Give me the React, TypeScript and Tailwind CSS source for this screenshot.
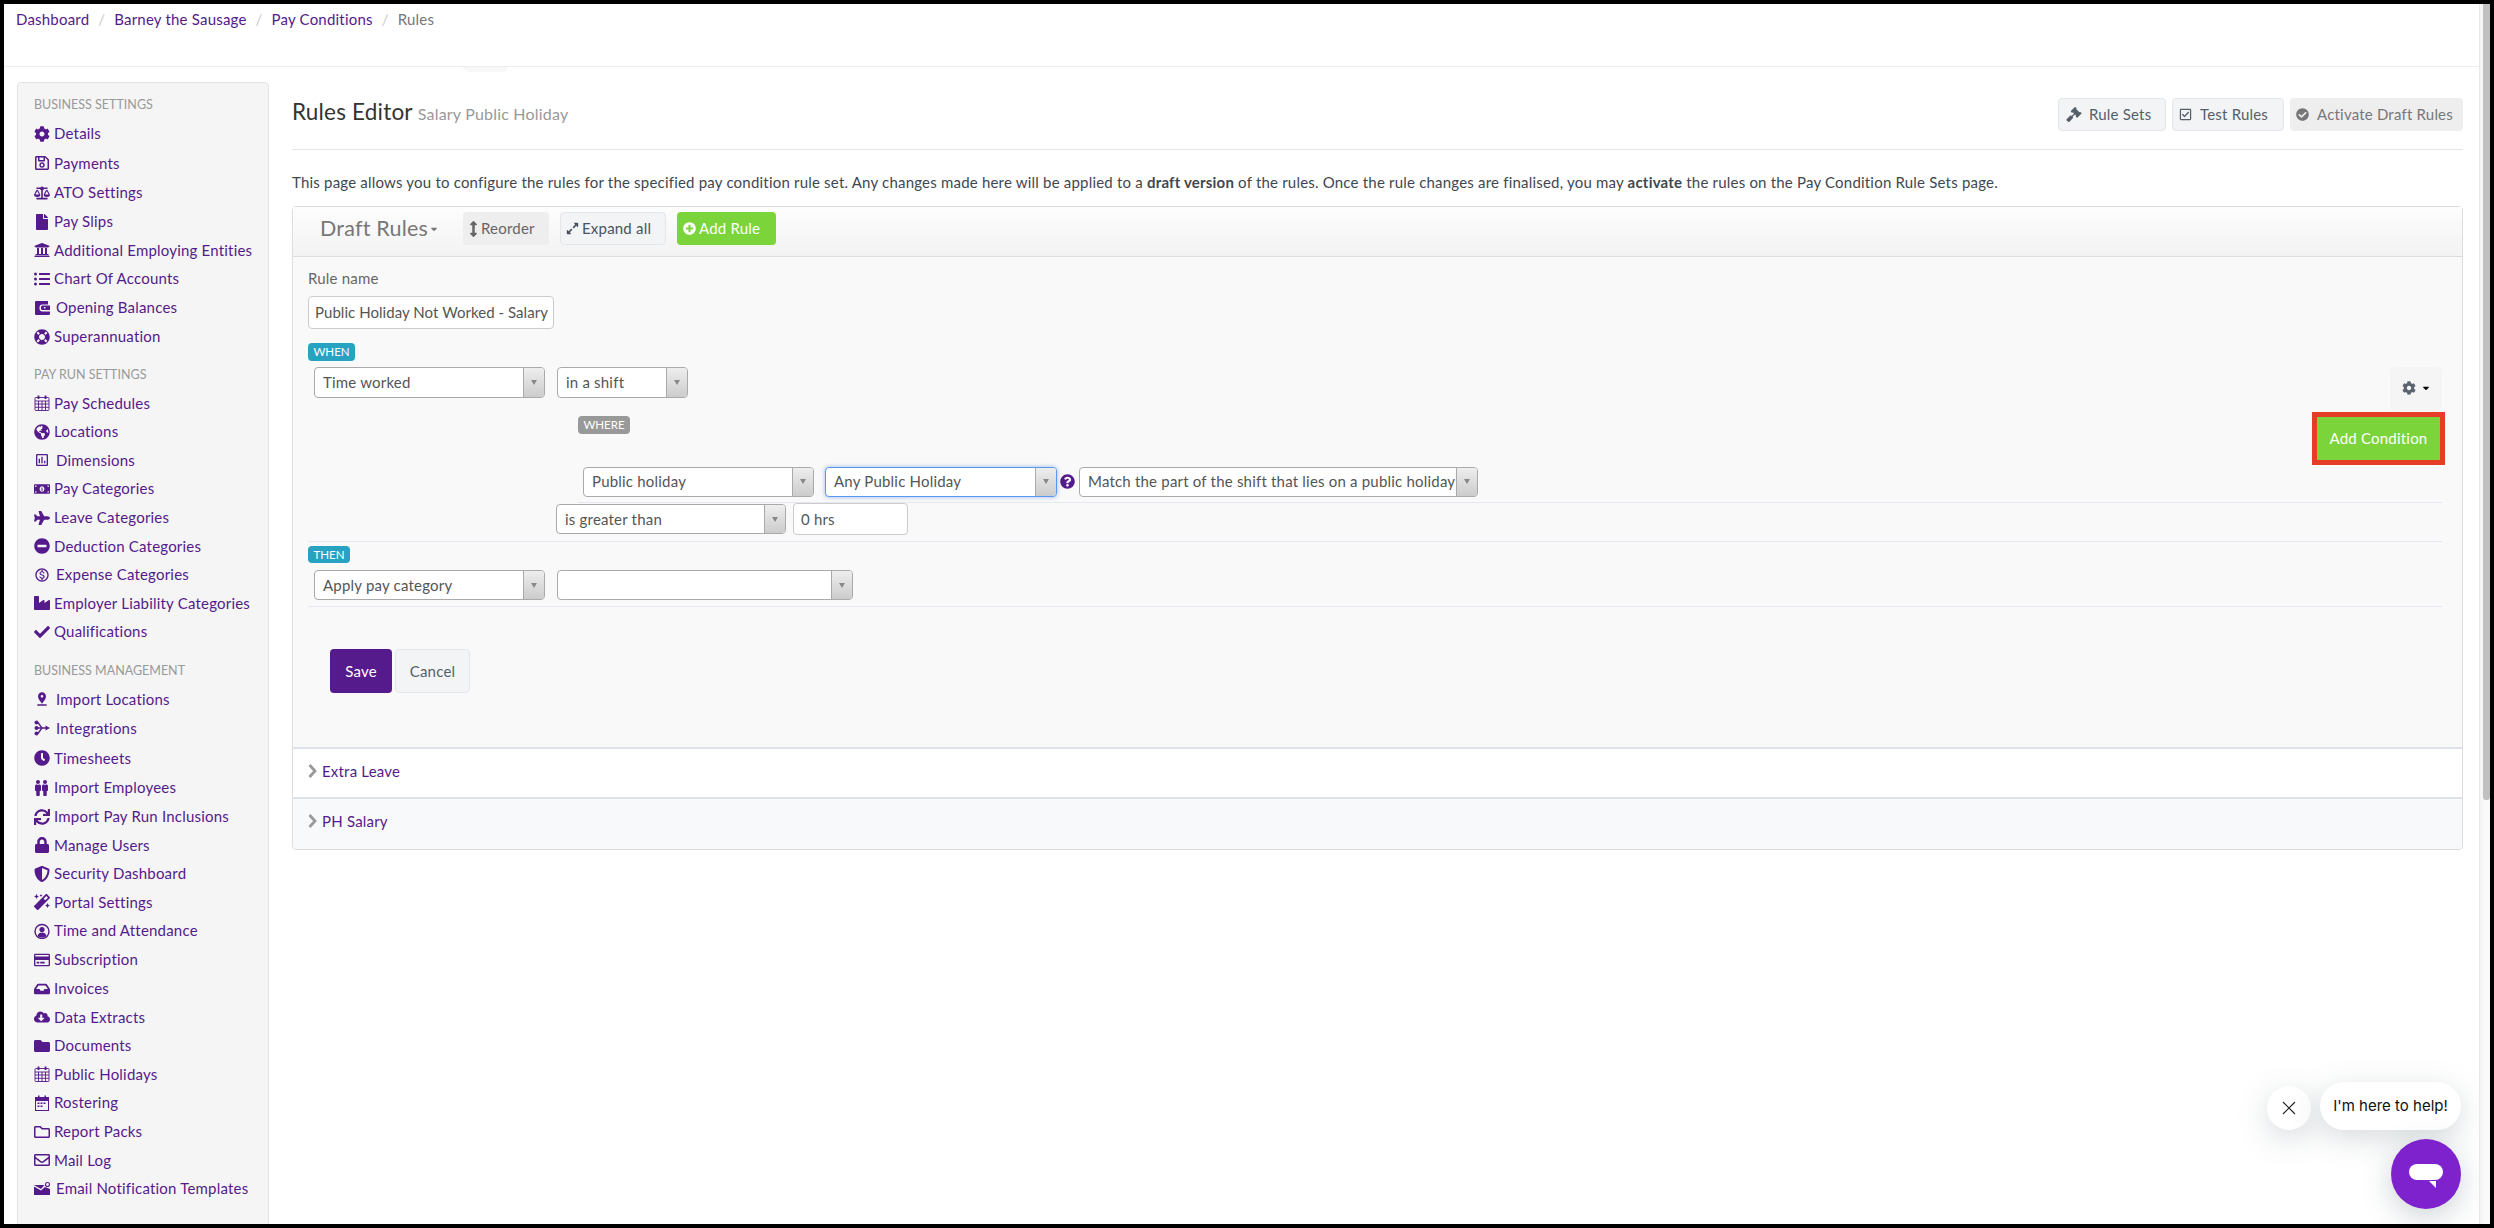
import type { ComponentType, ReactNode } from 'react';
import {
  FaBalanceScale, FaCaretDown, FaCheck, FaCheckCircle, FaCloudDownloadAlt, FaCog, FaExpandAlt,
  FaFile, FaFolder, FaGavel, FaGlobeAmericas, FaInbox, FaLifeRing, FaListUl, FaLock, FaMagic, FaMale, FaMinusCircle,
  FaMoneyBillAlt, FaPlane, FaPlusCircle, FaQuestionCircle, FaRegCheckSquare, FaClock,
  FaRegCreditCard, FaRegEnvelope, FaRegFolder, FaRegSave, FaShieldAlt, FaSync, FaUniversity, FaIndustry,
  FaArrowsAltV,
} from 'react-icons/fa';
import { MdOutlinePoll, MdPinDrop, MdOutlineMonetizationOn } from 'react-icons/md';

type Icon = ComponentType<{ className?: string }>;

function TwoPeople({ className }: { className?: string }) {
  return (
    <span className={`${className} inline-flex`}>
      <FaMale className="w-[8px] h-[16px] -mr-px" />
      <FaMale className="w-[8px] h-[16px]" />
    </span>
  );
}

function Branches({ className }: { className?: string }) {
  return (
    <svg viewBox="0 0 16 16" className={className} fill="currentColor">
      <circle cx="2.500" cy="2.500" r="2" />
      <circle cx="2.500" cy="8" r="2" />
      <circle cx="2.500" cy="13.500" r="2" />
      <path d="M4 2.500 8 8l-4 5.500M3 8h9" stroke="currentColor" strokeWidth="1.300" fill="none" />
      <path d="M11.500 5.500 16 8l-4.500 2.500z" />
    </svg>
  );
}

function Clockface({ className }: { className?: string }) {
  return (
    <svg viewBox="0 0 16 16" className={className} fill="currentColor">
      <circle cx="8" cy="8.500" r="7" fill="none" stroke="currentColor" strokeWidth="1.400" />
      <circle cx="8" cy="6.500" r="2.600" />
      <path d="M3.500 13c.5-2.500 2.500-3.500 4.500-3.500s4 1 4.500 3.500c-2.500 2-6.500 2-9 0z" />
    </svg>
  );
}

function CalendarGrid({ className }: { className?: string }) {
  return (
    <svg viewBox="0 0 16 16" className={className} fill="none" stroke="currentColor" strokeWidth="0.900">
      <rect x="1" y="2.500" width="14" height="13" rx="0.800" />
      <path d="M1 6h14M1 9h14M1 12.300h14M4.500 6v9.500M8 6v9.500M11.500 6v9.500" />
      <path d="M4.500 0.500v3.500M11.500 0.500v3.500" strokeWidth="1.800" />
    </svg>
  );
}

function CalendarDots({ className }: { className?: string }) {
  return (
    <svg viewBox="0 0 16 16" className={className} fill="currentColor">
      <path fillRule="evenodd" d="M1 2h14v14H1zM2 6v9h12V6z" />
      <path d="M4 0.500h1.500V3H4zM10.500 0.500H12V3h-1.500z" />
      <path d="M3.500 7.500h2v1.500h-2zM6.500 7.500h2v1.500h-2zM9.500 7.500h2v1.500h-2zM3.500 10.500h2V12h-2zM6.500 10.500h2V12h-2z" />
    </svg>
  );
}

function WalletBox({ className }: { className?: string }) {
  return (
    <svg viewBox="0 0 16 16" className={className} fill="currentColor">
      <path fillRule="evenodd" d="M2 1h12v3.500H8.500A3 3 0 0 0 5.500 7.500v1a3 3 0 0 0 3 3H16V13.500a1.500 1.500 0 0 1-1.500 1.500H2a1 1 0 0 1-1-1V2a1 1 0 0 1 1-1z" />
      <path fillRule="evenodd" d="M8.500 5.500H16v4.500H8.500a1.500 1.500 0 0 1-1.500-1.500v-1.500a1.500 1.500 0 0 1 1.500-1.500zM10 7v1.500h1.500V7z" />
    </svg>
  );
}

function MailBadge({ className }: { className?: string }) {
  return (
    <svg viewBox="0 0 16 16" className={className} fill="currentColor">
      <path d="M0 4h10.500L7 8 0 4zM0 5.500 7 9.500l4-3.500 5 2V14H0z" />
      <circle cx="13.500" cy="3.500" r="2" fill="none" stroke="currentColor" strokeWidth="1.100" />
    </svg>
  );
}

function Chevron() {
  return (
    <svg viewBox="0 0 9 14" className="w-[9px] h-[14px] mr-[5px]" fill="none" stroke="#999999" strokeWidth="2.800">
      <path d="M1.500 1 7 7l-5.500 6" />
    </svg>
  );
}

type NavItem = { label: string; icon: Icon; h: number; gap?: string };

const businessSettings: NavItem[] = [
  { label: 'Details', icon: FaCog, h: 29 },
  { label: 'Payments', icon: FaRegSave, h: 30 },
  { label: 'ATO Settings', icon: FaBalanceScale, h: 29 },
  { label: 'Pay Slips', icon: FaFile, h: 29 },
  { label: 'Additional Employing Entities', icon: FaUniversity, h: 28 },
  { label: 'Chart Of Accounts', icon: FaListUl, h: 29 },
  { label: 'Opening Balances', icon: WalletBox, h: 29, gap: 'ml-[2px]' },
  { label: 'Superannuation', icon: FaLifeRing, h: 29 },
];

const payRunSettings: NavItem[] = [
  { label: 'Pay Schedules', icon: CalendarGrid, h: 28 },
  { label: 'Locations', icon: FaGlobeAmericas, h: 29 },
  { label: 'Dimensions', icon: MdOutlinePoll, h: 28, gap: 'ml-[2px]' },
  { label: 'Pay Categories', icon: FaMoneyBillAlt, h: 29 },
  { label: 'Leave Categories', icon: FaPlane, h: 29 },
  { label: 'Deduction Categories', icon: FaMinusCircle, h: 28 },
  { label: 'Expense Categories', icon: MdOutlineMonetizationOn, h: 29, gap: 'ml-[2px]' },
  { label: 'Employer Liability Categories', icon: FaIndustry, h: 28 },
  { label: 'Qualifications', icon: FaCheck, h: 29 },
];

const businessManagement: NavItem[] = [
  { label: 'Import Locations', icon: MdPinDrop, h: 28, gap: 'ml-[2px]' },
  { label: 'Integrations', icon: Branches, h: 30, gap: 'ml-[2px]' },
  { label: 'Timesheets', icon: FaClock, h: 30 },
  { label: 'Import Employees', icon: TwoPeople, h: 29 },
  { label: 'Import Pay Run Inclusions', icon: FaSync, h: 29 },
  { label: 'Manage Users', icon: FaLock, h: 28 },
  { label: 'Security Dashboard', icon: FaShieldAlt, h: 29 },
  { label: 'Portal Settings', icon: FaMagic, h: 28 },
  { label: 'Time and Attendance', icon: Clockface, h: 29 },
  { label: 'Subscription', icon: FaRegCreditCard, h: 29 },
  { label: 'Invoices', icon: FaInbox, h: 29 },
  { label: 'Data Extracts', icon: FaCloudDownloadAlt, h: 28 },
  { label: 'Documents', icon: FaFolder, h: 29 },
  { label: 'Public Holidays', icon: CalendarGrid, h: 28 },
  { label: 'Rostering', icon: CalendarDots, h: 29 },
  { label: 'Report Packs', icon: FaRegFolder, h: 29 },
  { label: 'Mail Log', icon: FaRegEnvelope, h: 28 },
  { label: 'Email Notification Templates', icon: MailBadge, h: 29, gap: 'ml-[2px]' },
];

function NavGroup({ title, items }: { title: string; items: NavItem[] }) {
  return (
    <div>
      <div className="h-[29px] pt-[2px] flex items-center text-[12.500px] tracking-normal text-[#999999] uppercase">{title}</div>
      {items.map(item => (
        <div key={item.label} style={{ height: item.h }} className="flex items-center text-[#551a8b] text-[15px] whitespace-nowrap">
          <span className="w-[20px] shrink-0 flex">
            <item.icon className="w-[16px] h-[16px]" />
          </span>
          <span className={item.gap}>{item.label}</span>
        </div>
      ))}
    </div>
  );
}

function Select({ value, width, focus, height = 'h-[31px]' }: { value: string; width: string; focus?: boolean; height?: string }) {
  return (
    <div className={`${width} ${height} shrink-0 flex bg-white rounded-[4px] border ${focus ? 'border-[#5b97f0] shadow-[0_0_4px_rgba(60,120,220,0.5)]' : 'border-[#aaaaaa]'}`}>
      <div className="flex-1 min-w-0 pl-[8px] flex items-center text-[15px] text-[#555555] whitespace-nowrap overflow-hidden">{value}</div>
      <div className="w-[21px] shrink-0 flex items-center justify-center rounded-r-[3px] border-l border-[#aaaaaa] bg-gradient-to-b from-[#eeeeee] to-[#cccccc]">
        <span className="w-0 h-0 border-x-[3.500px] border-x-transparent border-t-[5px] border-t-[#888888]" />
      </div>
    </div>
  );
}

function Badge({ children, className }: { children: ReactNode; className: string }) {
  return (
    <div className={`${className} rounded-[4px] text-white text-[11.500px] tracking-normal flex items-center justify-center uppercase`}>{children}</div>
  );
}

function ToolButton({ icon, children, className }: { icon: ReactNode; children: ReactNode; className: string }) {
  return (
    <div className={`${className} flex items-center rounded-[4px] text-[15px] whitespace-nowrap`}>
      {icon}
      {children}
    </div>
  );
}

export default function App() {
  return (
    <div className="w-[2494px] h-[1228px] bg-black p-[4px] overflow-hidden flex tracking-[0.2px]" style={{ fontFamily: 'Lato, "Open Sans", sans-serif' }}>
      <div className="relative flex-1 min-w-0 h-full bg-white overflow-hidden flex flex-col">
        <div className="h-[63px] shrink-0 border-b border-[#eeeeee] pl-[12px] pt-[4px] flex items-start text-[15px] text-[#551a8b]">
          <span>Dashboard</span>
          <span className="text-[#cccccc] mx-[9px]">/</span>
          <span>Barney the Sausage</span>
          <span className="text-[#cccccc] mx-[9px]">/</span>
          <span>Pay Conditions</span>
          <span className="text-[#cccccc] mx-[9px]">/</span>
          <span className="text-[#777777]">Rules</span>
        </div>
        <div className="absolute left-[459px] top-[63px] w-[45px] h-[5px] rounded-b-[6px] bg-[#f8f8f8]" />

        <div className="flex flex-1 min-h-0 pt-[15px] pl-[13px]">
          <aside className="w-[252px] shrink-0 h-[1200px] rounded-[4px] border border-[#e3e3e3] bg-[#f5f5f5] pl-[16px] pt-[7px]">
            <NavGroup title="Business Settings" items={businessSettings} />
            <div className="h-[9px]" />
            <NavGroup title="Pay Run Settings" items={payRunSettings} />
            <div className="h-[10px]" />
            <NavGroup title="Business Management" items={businessManagement} />
          </aside>

          <main className="w-[2171px] ml-[23px] shrink-0">
            <div className="h-[68px] border-b border-[#e5e5e5] flex items-start justify-between">
              <div className="pt-[13px] flex items-baseline">
                <span className="text-[22.500px] text-[#333333]">Rules Editor</span>
                <span className="text-[16px] text-[#999999] ml-[5px]">Salary Public Holiday</span>
              </div>
              <div className="flex gap-[6px] pt-[16px]">
                <ToolButton className="w-[108px] h-[33px] pl-[7px] bg-[#f3f4f6] border border-[#e4e6ea] text-[#555f6b]" icon={<FaGavel className="w-[16px] h-[15px] mr-[7px]" />}>Rule Sets</ToolButton>
                <ToolButton className="w-[112px] h-[33px] pl-[6px] bg-[#f3f4f6] border border-[#e4e6ea] text-[#555f6b]" icon={<FaRegCheckSquare className="w-[13px] h-[13px] mr-[8px]" />}>Test Rules</ToolButton>
                <ToolButton className="w-[173px] h-[33px] pl-[6px] bg-[#eeeeee] text-[#777777]" icon={<FaCheckCircle className="w-[13px] h-[13px] mr-[8px]" />}>Activate Draft Rules</ToolButton>
              </div>
            </div>

            <p className="h-[56px] pt-[21px] text-[15px] text-[#3f4750] whitespace-nowrap">
              This page allows you to configure the rules for the specified pay condition rule set. Any changes made here will be applied to a <b>draft version</b> of the rules. Once the rule changes are finalised, you may <b>activate</b> the rules on the Pay Condition Rule Sets page.
            </p>

            <div className="rounded-[4px] border border-[#dddddd]">
              <div className="h-[50px] flex items-start pt-[5px] pl-[27px] border-b border-[#dddddd] bg-gradient-to-b from-[#fdfdfd] to-[#f3f3f3]">
                <div className="w-[143px] h-[33px] flex items-center text-[21.500px] text-[#777777]">
                  Draft Rules
                  <FaCaretDown className="w-[10px] h-[10px] ml-[1px]" />
                </div>
                <ToolButton className="w-[86px] h-[33px] pl-[6px] bg-[#eeeeee] text-[#666666]" icon={<FaArrowsAltV className="w-[9px] h-[16px] mr-[3px]" />}>Reorder</ToolButton>
                <ToolButton className="w-[106px] h-[33px] ml-[11px] pl-[5px] bg-[#f3f4f6] border border-[#e4e6ea] text-[#4a5360]" icon={<FaExpandAlt className="w-[13px] h-[13px] mr-[3px]" />}>Expand all</ToolButton>
                <ToolButton className="w-[99px] h-[33px] ml-[11px] pl-[6px] bg-[#7ad43a] text-white" icon={<FaPlusCircle className="w-[13px] h-[13px] mr-[3px]" />}>Add Rule</ToolButton>
              </div>

              <div className="h-[492px] bg-[#f9f9f9] border-b-2 border-[#dfe3e8] pl-[15px] pr-[17px] relative">
                <div className="pt-[10px] h-[39px] text-[15px] text-[#666666]">Rule name</div>
                <div className="w-[246px] h-[33px] bg-white border border-[#cccccc] rounded-[4px] pl-[6px] pr-[5px] flex items-center text-[15px] tracking-[0.05px] text-[#555555] whitespace-nowrap overflow-hidden">
                  <span className="overflow-hidden">Public Holiday Not Worked - Salary</span>
                </div>

                <Badge className="w-[47px] h-[18px] mt-[14px] bg-[#27a3c1]">When</Badge>
                <div className="flex gap-[12px] mt-[6px] ml-[6px]">
                  <Select value="Time worked" width="w-[231px]" />
                  <Select value="in a shift" width="w-[131px]" />
                </div>
                <Badge className="w-[52px] h-[18px] mt-[18px] ml-[270px] bg-[#999999]">Where</Badge>

                <div className="flex items-center mt-[32px] ml-[275px] h-[31px]">
                  <Select value="Public holiday" width="w-[231px]" height="h-[30px]" />
                  <div className="w-[11px]" />
                  <Select value="Any Public Holiday" width="w-[232px]" focus height="h-[30px]" />
                  <FaQuestionCircle className="w-[15px] h-[15px] ml-[3px] mr-[4px] text-[#551a8b]" />
                  <Select value="Match the part of the shift that lies on a public holiday" width="w-[399px]" height="h-[30px]" />
                </div>
                <div className="ml-[270px] mr-[3px] mt-[5px] border-t border-[#e4e9f0] h-[1px]" />
                <div className="flex items-center ml-[248px] gap-[7px]">
                  <Select value="is greater than" width="w-[230px]" height="h-[30px]" />
                  <div className="w-[115px] h-[32px] bg-white border border-[#cccccc] rounded-[4px] flex items-center pl-[7px] text-[15px] text-[#555555]">0 hrs</div>
                </div>
                <div className="mt-[6px] mr-[3px] border-t border-[#e4e9f0] h-[1px]" />

                <Badge className="w-[42px] h-[17px] mt-[4px] bg-[#27a3c1]">Then</Badge>
                <div className="flex gap-[12px] mt-[7px] ml-[6px]">
                  <Select value="Apply pay category" width="w-[231px]" height="h-[30px]" />
                  <Select value="" width="w-[296px]" height="h-[30px]" />
                </div>
                <div className="mt-[6px] mr-[3px] border-t border-[#e4e9f0] h-[1px]" />

                <div className="flex mt-[42px] ml-[22px] gap-[3px]">
                  <div className="w-[62px] h-[44px] rounded-[4px] bg-[#551a8b] text-white text-[15px] flex items-center justify-center">Save</div>
                  <div className="w-[75px] h-[44px] rounded-[4px] bg-[#f3f4f6] border border-[#e4e6ea] text-[#555f6b] text-[15px] flex items-center justify-center">Cancel</div>
                </div>

                <div className="absolute top-[110px] right-[17px] flex flex-col items-end">
                  <div className="w-[52px] h-[44px] mr-[3px] pb-[3px] rounded-[4px] bg-[#f5f5f5] flex items-center justify-center text-[#5a6470]">
                    <FaCog className="w-[14px] h-[14px]" />
                    <FaCaretDown className="w-[10px] h-[10px] ml-[5px] text-black" />
                  </div>
                  <div className="w-[133px] h-[53px] mt-[1px] pb-[1px] bg-[#7ad43a] border-[5px] border-[#e53d27] text-white text-[15px] flex items-center justify-center">Add Condition</div>
                </div>
              </div>

              <div className="h-[50px] bg-white border-b-2 border-[#dfe3e8] pl-[15px] pb-[4px] flex items-center text-[15px] text-[#551a8b]">
                <Chevron />
                Extra Leave
              </div>
              <div className="h-[50px] bg-[#f8f9fa] rounded-b-[4px] pl-[15px] pb-[6px] flex items-center text-[15px] text-[#551a8b]">
                <Chevron />
                PH Salary
              </div>
            </div>
          </main>
        </div>

        <div className="absolute left-[2263px] top-[1082px] w-[44px] h-[44px] rounded-full bg-white shadow-[0_8px_30px_rgba(90,110,120,0.25)] flex items-center justify-center">
          <svg viewBox="0 0 14 14" className="w-[14px] h-[14px]" stroke="#222222" strokeWidth="1.100" fill="none"><path d="M1 1l12 12M13 1 1 13" /></svg>
        </div>
        <div className="absolute left-[2316px] top-[1078px] w-[141px] h-[48px] rounded-[24px] bg-white shadow-[0_8px_30px_rgba(90,110,120,0.25)] flex items-center justify-center text-[15px] tracking-normal text-[#111111]" style={{ fontFamily: 'Inter, sans-serif' }}>
          I'm here to help!
        </div>
        <div className="absolute left-[2387px] top-[1135px] w-[70px] h-[70px] rounded-full bg-[#7e22ce] shadow-[0_8px_30px_rgba(90,110,120,0.3)] flex items-center justify-center">
          <svg viewBox="0 0 34 30" className="w-[34px] h-[30px]" fill="white"><rect x="0" y="5" width="34" height="16" rx="8" /><path d="M20 22h7v7z" /></svg>
        </div>
      </div>

      <div className="w-[11px] shrink-0 h-full flex bg-[#fafafa] border-l border-[#e8e8e8]">
        <div className="w-[3px] bg-[#f5f5f5]" />
        <div className="w-[7px] h-[796px] rounded-b-[3px] bg-[#c0c0c0]" />
      </div>
    </div>
  );
}
